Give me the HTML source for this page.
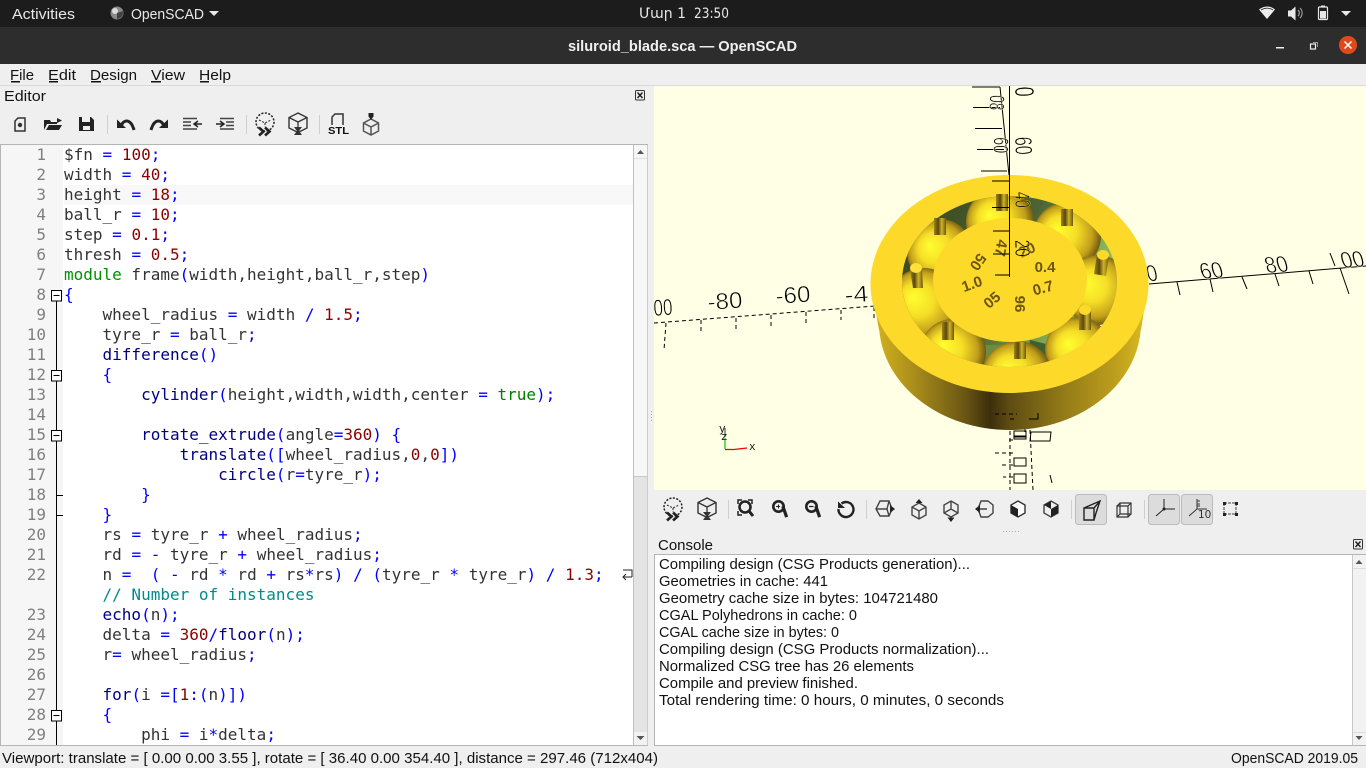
<!DOCTYPE html>
<html><head><meta charset="utf-8"><title>OpenSCAD</title>
<style>
html,body{margin:0;padding:0;width:1366px;height:768px;overflow:hidden;background:#efefef}
svg.m{position:absolute;left:0;top:0}
pre{position:absolute;left:64px;top:145px;margin:0;width:570px;height:600px;overflow:hidden;font:16px/20px "DejaVu Sans Mono","Liberation Mono",monospace;color:#333}
i{font-style:normal}
.n{color:#8b0000}.o{color:#0000ff}.k{color:#009000}.b{color:#000080}.c{color:#008b8b}.t{color:#008000}
#ln{position:absolute;left:0;top:145px;width:46px;text-align:right;font:16px/20px "DejaVu Sans Mono",monospace;color:#808080;white-space:pre;height:600px;overflow:hidden}
text{font-family:"Liberation Sans",sans-serif;font-size:15px;fill:#111}
.ax text{font-size:23px;fill:#000;stroke:#ffffe5;stroke-width:.55}
.eng text{font:bold 15px "Liberation Sans",sans-serif;fill:#6b5510;text-anchor:middle}
</style></head><body>
<svg class="m" width="1366" height="768" viewBox="0 0 1366 768" xmlns="http://www.w3.org/2000/svg">
<defs>
<linearGradient id="side" gradientUnits="userSpaceOnUse" x1="871" y1="0" x2="1148" y2="0">
<stop offset="0" stop-color="#d8b620"/><stop offset=".16" stop-color="#a88c1a"/><stop offset=".34" stop-color="#6a5614"/><stop offset=".43" stop-color="#3c2e0c"/><stop offset=".5" stop-color="#5e4c12"/><stop offset=".7" stop-color="#947c18"/><stop offset=".88" stop-color="#bc9e1c"/><stop offset="1" stop-color="#dcbc22"/></linearGradient>
<radialGradient id="ball" cx=".5" cy=".5" r=".56" fx=".34" fy=".4">
<stop offset="0" stop-color="#ffff30"/><stop offset=".42" stop-color="#f6de26"/><stop offset=".74" stop-color="#c2a01c"/><stop offset=".93" stop-color="#6a5410"/><stop offset="1" stop-color="#403208"/></radialGradient>
<linearGradient id="pin" x1="0" x2="1" y1="0" y2="0"><stop offset="0" stop-color="#a08418"/><stop offset=".35" stop-color="#5a4810"/><stop offset=".65" stop-color="#d0b426"/><stop offset="1" stop-color="#6a5612"/></linearGradient>
<linearGradient id="hole" gradientUnits="userSpaceOnUse" x1="930" y1="200" x2="1110" y2="290"><stop offset="0" stop-color="#3c4a22"/><stop offset=".5" stop-color="#4c6434"/><stop offset="1" stop-color="#9ccc60"/></linearGradient>
<clipPath id="hc"><ellipse cx="1009.5" cy="281.5" rx="107.5" ry="85.5"/></clipPath>
<clipPath id="vp"><rect x="654" y="86" width="712" height="404"/></clipPath>
<g id="prev" fill="none" stroke="#222"><circle cx="0" cy="-2" r="9" stroke-width="1.5" stroke-dasharray="2 1.5"/><path d="M-6-4 0-1 6-4M0-1V3" stroke-width="1" stroke-dasharray="2 1.5"/><path d="M-6 3.500-1.500 7.500-6 11.500M0 3.500 4.500 7.500 0 11.500" stroke-width="2.600"/></g>
<g id="rend" fill="none" stroke="#333"><path d="M0-11 9-6.500V4L0 8.500-9 4V-6.500Z" stroke-width="1.400"/><path d="M-9-6.500 0-2 9-6.500M0-2V3" stroke-width="1.300"/><path d="M-4 3H4L1 7 4 11H-4L-1 7Z" fill="#333" stroke="none"/></g>
<g id="mag"><circle cx="-1.5" cy="-1.5" r="5.2" fill="none" stroke="#222" stroke-width="2.6"/><path d="M2-2 8 8" transform="rotate(12 2 2)" stroke="#222" stroke-width="3.2" fill="none"/></g>
</defs>

<!-- top bar -->
<rect width="1366" height="27" fill="#1c1c1c"/>
<rect y="27" width="1366" height="37" fill="#2d2d2d"/>
<g>
<text x="12" y="19" textLength="63" lengthAdjust="spacingAndGlyphs" style="fill:#e8e8e8">Activities</text>
<circle cx="117" cy="13" r="6.500" fill="#8a8a8a"/><circle cx="115" cy="11" r="3" fill="#dcdcdc"/><path d="M117 19a6.500 6.500 0 0 0 6-8l-6 2z" fill="#444"/>
<text x="131" y="19" textLength="73" lengthAdjust="spacingAndGlyphs" style="fill:#e8e8e8">OpenSCAD</text>
<path d="M209 11h10l-5 5z" fill="#e8e8e8"/>
<text x="639" y="18" textLength="47" lengthAdjust="spacingAndGlyphs" style='fill:#e8e8e8;font-family:"DejaVu Sans",sans-serif;font-size:14px'>Մար 1</text>
<text x="694" y="18" textLength="35" lengthAdjust="spacingAndGlyphs" style='fill:#e8e8e8;font-family:"DejaVu Sans",sans-serif;font-size:14px'>23:50</text>
<path d="M1259 9.500C1264 5.500 1270 5.500 1275 9.500L1267 19Z" fill="#eee"/><path d="M1261 10C1265 7.500 1269 7.500 1273 10" stroke="#1c1c1c" stroke-width=".8" fill="none"/>
<path d="M1288 10.500h3l4.500-4v14l-4.500-4h-3z" fill="#e8e8e8"/><path d="M1298 10a4 4 0 0 1 0 6M1300 8a7 7 0 0 1 0 10" stroke="#999" stroke-width="1.200" fill="none"/>
<rect x="1318.500" y="7" width="9" height="12.500" rx="1" fill="none" stroke="#e8e8e8" stroke-width="1.200"/><rect x="1321" y="5.500" width="4" height="1.500" fill="#e8e8e8"/><rect x="1320" y="11" width="6" height="7.500" fill="#e8e8e8"/>
<path d="M1341 11h10l-5 5z" fill="#e8e8e8"/>
<text x="568" y="51" textLength="229" lengthAdjust="spacingAndGlyphs" style="fill:#f0f0f0;font-weight:bold">siluroid_blade.sca — OpenSCAD</text>
<rect x="1276" y="47" width="8" height="1.500" fill="#f0f0f0"/>
<rect x="1310.500" y="44" width="5" height="5" fill="none" stroke="#f0f0f0" stroke-width="1.200"/><path d="M1313 42.500h4.500v4.500" stroke="#999" fill="none"/>
<circle cx="1348" cy="45" r="9" fill="#e2491a"/><path d="M1344.500 41.500 1351.500 48.500M1351.500 41.500 1344.500 48.500" stroke="#fff" stroke-width="1.500"/>
</g>

<!-- menu -->
<rect y="64" width="1366" height="21" fill="#efefef"/>
<rect y="85" width="1366" height="1" fill="#dadada"/>
<text x="10" y="80" textLength="24" lengthAdjust="spacingAndGlyphs">File</text><rect x="11" y="81" width="9" height="1.500" fill="#111"/>
<text x="48" y="80" textLength="28" lengthAdjust="spacingAndGlyphs">Edit</text><rect x="49" y="81" width="9" height="1.500" fill="#111"/>
<text x="90" y="80" textLength="47" lengthAdjust="spacingAndGlyphs">Design</text><rect x="91" y="81" width="10" height="1.500" fill="#111"/>
<text x="151" y="80" textLength="34" lengthAdjust="spacingAndGlyphs">View</text><rect x="151" y="81" width="10" height="1.500" fill="#111"/>
<text x="199" y="80" textLength="32" lengthAdjust="spacingAndGlyphs">Help</text><rect x="200" y="81" width="9" height="1.500" fill="#111"/>
<text x="4" y="101" textLength="42" lengthAdjust="spacingAndGlyphs">Editor</text>
<g><rect x="635.500" y="90.500" width="9" height="9.500" rx="1" fill="none" stroke="#333"/><path d="M637.500 92.500 642.500 98M642.500 92.500 637.500 98" stroke="#222" stroke-width="1.500"/></g>

<!-- editor toolbar -->
<g fill="none" stroke="#333">
<path d="M18 118h7v13H15v-10z" stroke-width="1.500"/><circle cx="20" cy="125" r="2.200" fill="#333" stroke="none"/>
<path d="M44 120h6l1 2h6v2H47l-3 6zM46 130l3-5h13l-3 5z" fill="#222" stroke="none"/><path d="M57 118l5 2.500-5 2.500z" fill="#222" stroke="none"/>
<path d="M79 117h12l3 3v11H79zM82 117v5h8v-5M82 131v-6h9v6" fill="#222" stroke="none"/><rect x="83" y="126" width="7" height="4" fill="#efefef" stroke="none"/><rect x="83" y="118" width="5" height="3" fill="#efefef" stroke="none"/>
<path d="M121 126C124 118.500 131 119 134 130" stroke="#222" stroke-width="3"/><path d="M117 119.500V128H126Z" fill="#222" stroke="none"/>
<path d="M164 126C161 118.500 154 119 151 130" stroke="#222" stroke-width="3"/><path d="M168 119.500V128H159Z" fill="#222" stroke="none"/>
<path d="M183 118.500h14M183 122h8M183 125.500h8M183 129h14" stroke-width="1.500" stroke="#444"/><path d="M202 124h-7M198 121l-4 3 4 3" stroke="#222" stroke-width="1.500"/>
<path d="M220 118.500h14M226 122h8M226 125.500h8M220 129h14" stroke-width="1.500" stroke="#444"/><path d="M216 124h7M220 121l4 3-4 3" stroke="#222" stroke-width="1.500"/>
</g>
<rect x="107" y="115" width="1" height="19" fill="#cfcfcf"/><rect x="246" y="115" width="1" height="19" fill="#cfcfcf"/><rect x="319" y="115" width="1" height="19" fill="#cfcfcf"/>
<use href="#prev" x="265" y="124"/><use href="#rend" x="298" y="124"/>
<path d="M332 125v-8h0l3-3h8v11" fill="none" stroke="#333" stroke-width="1.500"/>
<text x="328" y="134" textLength="21" lengthAdjust="spacingAndGlyphs" style="font-size:10.500px;font-weight:bold;fill:#111">STL</text>
<g fill="none" stroke="#555" stroke-width="1.500"><path d="M371 119 378.500 123V131L371 135 363.500 131V123ZM363.500 123 371 127 378.500 123M371 127V135"/></g><rect x="368.500" y="113" width="5" height="4" fill="#222"/><path d="M369 117h4l-2 3z" fill="#222"/>

<!-- editor frame -->
<rect x="0" y="144" width="648" height="601" fill="#fff" stroke="none"/>
<rect x="0.500" y="144.500" width="647" height="601" fill="none" stroke="#b5b5b5"/>
<rect x="1" y="145" width="62" height="600" fill="#f6f6f6"/>
<rect x="64" y="185" width="570" height="20" fill="#f8f8f8"/>
<rect x="633.500" y="145" width="14" height="600" fill="#e4e4e4"/>
<rect x="633" y="145" width="1" height="600" fill="#c0c0c0"/>
<rect x="634" y="145" width="13" height="331" fill="#f7f7f7"/>
<rect x="634" y="158" width="13" height="1" fill="#e0e0e0"/><rect x="634" y="476" width="13" height="1" fill="#c8c8c8"/>
<rect x="634" y="732" width="13" height="13" fill="#f2f2f2"/>
<path d="M637 154h7l-3.500-4z" fill="#555"/><path d="M636.500 736h8l-4 4z" fill="#555"/>

<!-- fold margin -->
<path d="M56.500 295V745" stroke="#000"/>
<g fill="#fff" stroke="#000"><rect x="51.500" y="290.500" width="10" height="10.500"/><rect x="51.500" y="370.500" width="10" height="10.500"/><rect x="51.500" y="430.500" width="10" height="10.500"/><rect x="51.500" y="710.500" width="10" height="10.500"/></g>
<path d="M53.500 295.500h6M53.500 375.500h6M53.500 435.500h6M53.500 715.500h6M57 495.500h6M57 515.500h6" stroke="#000"/>
<path d="M632 577h-9M626 574l-3 3 3 3M623 570h9v7" fill="none" stroke="#222"/>

<!-- viewer -->
<rect x="654" y="86" width="712" height="404" fill="#ffffe5"/>
<g clip-path="url(#vp)">
<g fill="none" stroke="#000" stroke-width="1">
<path stroke-dasharray="4 3" d="M654 323 875 306M666 323 664 350M701 320V332M736 318V329M771 315V326M806 312V323M841 310V320M874 307V318"/>
<path stroke-dasharray="4 3" d="M1010 424V490M1030 430 1033 490M1025 415V432M1013 414h-6M1013 440h-7M1013 453h-21M1013 465h-12M1013 477h-10"/>
<path d="M1149 284 1366 266M1177 282 1180 295M1210 279 1213 292M1242 277 1247 289M1275 274 1279 286M1309 271 1313 284M1340 268 1349 294M1330 253 1335 266M1050 475 1052 483"/>
<path d="M1009.500 85V175M971 87M972 87H1000M1000 87 1009 175M973 107.500H1000M975 128.500H1002M977 149.500H1004M981 171H1007"/>
</g>
<!-- axis labels -->
<g class="ax">
<text transform="translate(708,310) rotate(-4)" textLength="35" lengthAdjust="spacingAndGlyphs">-80</text>
<text transform="translate(776,304) rotate(-4)" textLength="35" lengthAdjust="spacingAndGlyphs">-60</text>
<text transform="translate(845,303) rotate(-4)" textLength="24" lengthAdjust="spacingAndGlyphs">-4</text>
<text transform="translate(654,316) rotate(-4)" textLength="19" lengthAdjust="spacingAndGlyphs">00</text>
<text transform="translate(1202,279) rotate(-4) skewX(12)" textLength="23" lengthAdjust="spacingAndGlyphs">60</text>
<text transform="translate(1267,273) rotate(-4) skewX(12)" textLength="23" lengthAdjust="spacingAndGlyphs">80</text>
<text transform="translate(1343,268) rotate(-4) skewX(12)" textLength="23" lengthAdjust="spacingAndGlyphs">00</text>
<text transform="translate(1148,281) skewX(12)" textLength="11" lengthAdjust="spacingAndGlyphs">0</text>
<text transform="translate(990,95) rotate(92)" textLength="15" lengthAdjust="spacingAndGlyphs" style="font-size:21px">08</text>
<text transform="translate(994,137) rotate(92)" textLength="16" lengthAdjust="spacingAndGlyphs" style="font-size:21px">60</text>
<text transform="translate(1015,137) rotate(88)" textLength="18" lengthAdjust="spacingAndGlyphs" style="font-size:24px">60</text>
<text transform="translate(1015,87) rotate(88)" textLength="10" lengthAdjust="spacingAndGlyphs" style="font-size:27px">0</text>
</g>
<!-- wheel -->
<path d="M871 284 879 330 1141 330 1148 284Z" fill="url(#side)"/>
<ellipse cx="1010" cy="323" rx="131" ry="107" fill="url(#side)"/>
<ellipse cx="1009.500" cy="284" rx="139" ry="109" fill="#fdd92a"/>
<ellipse cx="1009.500" cy="281.500" rx="107.500" ry="85.500" fill="url(#hole)"/>
<g clip-path="url(#hc)">
<path d="M920 331 930 340 917 338ZM1097 326 1108 320 1101 333Z" fill="#fff"/>
<path d="M1030 340 1050 345 1045 370H1025Z" fill="#3f5f30"/>
<path d="M970 345 1000 345 1000 370 975 370Z" fill="#6b8c42"/>
<circle cx="1000" cy="222" r="34" fill="url(#ball)"/>
<circle cx="1067" cy="236" r="34" fill="url(#ball)"/>
<circle cx="940" cy="252" r="33" fill="url(#ball)"/>
<circle cx="1097" cy="290" r="35" fill="url(#ball)"/>
<circle cx="1078" cy="350" r="33" fill="url(#ball)"/>
<circle cx="924" cy="304" r="36" fill="url(#ball)"/>
<circle cx="953" cy="352" r="33" fill="url(#ball)"/>
<circle cx="1017" cy="376" r="35" fill="url(#ball)"/>
</g>
<!-- pins -->
<g>
<rect x="996" y="194" width="12" height="17" fill="url(#pin)"/>
<rect x="1061" y="209" width="12" height="17" fill="url(#pin)"/>
<rect x="934" y="218" width="12" height="17" fill="url(#pin)"/>
<path d="M1097 254 1109 256 1106 276 1094 274Z" fill="url(#pin)"/><ellipse cx="1103" cy="255" rx="6" ry="5" fill="#fdd92a"/>
<path d="M910 269 922 268 923 288 913 288Z" fill="url(#pin)"/><ellipse cx="916" cy="268" rx="6" ry="5" fill="#ffdf3a"/>
<rect x="1079" y="310" width="12" height="20" fill="url(#pin)"/><ellipse cx="1085" cy="310" rx="6" ry="5" fill="#fdd92a"/>
<rect x="942" y="322" width="12" height="18" fill="url(#pin)"/>
</g>
<ellipse cx="1010" cy="280" rx="77" ry="62" fill="#fdd92a"/>
<rect x="1014" y="342" width="12" height="17" fill="url(#pin)"/>
<!-- engraved digits -->
<g class="eng">
<text transform="translate(1001,248) rotate(100)" y="5">47</text>
<text transform="translate(978,262) rotate(125)" y="5">50</text>
<text transform="translate(972,284) rotate(-20)" y="5">1.0</text>
<text transform="translate(992,300) rotate(-40)" y="5">05</text>
<text transform="translate(1020,304) rotate(90)" y="5">96</text>
<text transform="translate(1043,288) rotate(-15)" y="5">0.7</text>
<text transform="translate(1045,267)" y="5">0.4</text>
<text transform="translate(1027,250) rotate(-25)" y="5">20</text>
</g>
<!-- front axes -->
<g fill="none" stroke="#000">
<path d="M1009.500 175V277M992 181H1009M992 207.500H1009M993 231H1009M993 254H1009M995 275H1009"/>
<path d="M1029 419h9v-6M1031 432h20l-1 9h-20z M1014 431h12v5h-12z"/>
<path d="M995 414h22M1010 419h7" stroke-dasharray="4 3"/>
<path d="M1014 437h12v2h-12zM1014 458h12v8h-12zM1014 474h12v9h-12z"/>
</g>
<g class="ax">
<text transform="translate(1015,192) rotate(88)" textLength="16" lengthAdjust="spacingAndGlyphs" style="font-size:21px;stroke:#fdd92a">40</text>
<text transform="translate(1015,240) rotate(88)" textLength="17" lengthAdjust="spacingAndGlyphs" style="font-size:21px;stroke:#fdd92a">20</text>
</g>
<!-- axes gizmo -->
<path d="M725 449V438" stroke="#0c0" stroke-width="1.200"/><path d="M725 437V428" stroke="#333"/>
<path d="M725 449.500H734L747 448" stroke="#e00" stroke-width="1.200" fill="none"/>
<text x="749" y="450" style="font:11px 'Liberation Mono',monospace;fill:#111">x</text>
<text x="719" y="432" style="font:11px 'Liberation Mono',monospace;fill:#111">y</text>
<text x="721" y="440" style="font:11px 'Liberation Mono',monospace;fill:#111">z</text>
</g>

<!-- viewer toolbar -->
<rect x="654" y="490" width="712" height="64" fill="#efefef"/>
<use href="#prev" x="673" y="509"/><use href="#rend" x="707" y="509"/>
<rect x="728" y="500" width="1" height="19" fill="#cfcfcf"/><rect x="866" y="500" width="1" height="19" fill="#cfcfcf"/><rect x="1071" y="500" width="1" height="19" fill="#cfcfcf"/><rect x="1144" y="500" width="1" height="19" fill="#cfcfcf"/>
<circle cx="745" cy="507" r="5.500" fill="none" stroke="#222" stroke-width="2.600"/><path d="M749 511 753 516" stroke="#222" stroke-width="3"/><path d="M738 504v-4h4M748 500h4v4M738 511v4h4" fill="none" stroke="#222" stroke-width="1.500"/>
<use href="#mag" x="780" y="508"/><path d="M776 506.500h4M778.500 504.500v4" stroke="#222"/>
<use href="#mag" x="813" y="508"/><path d="M809 506.500h4.500" stroke="#222" stroke-width="1.200"/>
<path d="M841.500 503.500A7.500 7.500 0 1 1 838.500 509" fill="none" stroke="#222" stroke-width="2.400"/><path d="M838 501.500V508H845Z" fill="#222"/>
<g fill="none" stroke="#444" stroke-width="1.400">
<path d="M880 501 889 501 892 509 889 516 880 516 876 509Z M876 509H887L889 501M887 509 889 516"/>
<path d="M919 503 926 507V515L919 519 912 515V507ZM912 507 919 511 926 507M919 511V519"/>
<path d="M951 501 958 505V513L951 517 944 513V505ZM944 513 951 509 958 513M951 509V502"/>
<path d="M988 501 993 505V513L988 517 981 517 978 509 981 501ZM978 509H987"/>
<path d="M1051 501 1058 505V513L1051 517 1044 513V505Z"/>
</g>
<path d="M890 505l5 4-5 4zM919 499l3.500 4h-7zM951 522l-3.500-4.500h7zM980 505l-5 4 5 4z" fill="#222"/>
<path d="M1018 501 1025 505V513L1018 517 1011 513V505Z" fill="#fff" stroke="#333" stroke-width="1.400"/><path d="M1011 505 1018 509V517L1011 513Z" fill="#222"/>
<path d="M1051 509 1058 505V513L1051 517Z" fill="#222"/><path d="M1044 505 1051 509V501Z" fill="#222"/>
<rect x="1075.500" y="494.500" width="31" height="30" rx="3" fill="#dcdcdc" stroke="#bbb"/>
<path d="M1084 508h10v12h-10zM1084 508 1100 501 1096 513 1094 520M1094 508 1100 501" fill="none" stroke="#222" stroke-width="1.400"/>
<path d="M1117 506h11v11h-11zM1120 503h11v11h-11zM1117 506l3-3M1128 506l3-3M1117 517l3-3M1128 517l3-3" fill="none" stroke="#333" stroke-width="1.200"/>
<rect x="1148.500" y="494.500" width="31" height="30" rx="3" fill="#dcdcdc" stroke="#bbb"/>
<rect x="1181.500" y="494.500" width="31" height="30" rx="3" fill="#dcdcdc" stroke="#bbb"/>
<path d="M1164 499V509M1164 509H1175M1164 509 1156 516" stroke="#222" fill="none"/><circle cx="1164" cy="509" r="1.500" fill="#222"/>
<path d="M1197 499V509M1197 509H1207M1197 509 1189 516M1197 501h3M1197 504h3M1197 506h3" stroke="#333" fill="none"/>
<text x="1198" y="518" style="font:10.500px 'DejaVu Sans',sans-serif;fill:#333">10</text>
<path d="M1224 503h12M1224 514h12M1224 503v11M1236 503v11" stroke="#444" stroke-dasharray="3 1" fill="none"/><g fill="#222"><rect x="1223" y="502" width="3" height="3"/><rect x="1235" y="502" width="3" height="3"/><rect x="1223" y="513" width="3" height="3"/><rect x="1235" y="513" width="3" height="3"/></g>
<g fill="#aaa"><rect x="1003" y="531" width="1" height="1"/><rect x="1006" y="531" width="1" height="1"/><rect x="1009" y="531" width="1" height="1"/><rect x="1012" y="531" width="1" height="1"/><rect x="1015" y="531" width="1" height="1"/><rect x="1018" y="531" width="1" height="1"/><rect x="651" y="411" width="1" height="1"/><rect x="651" y="414" width="1" height="1"/><rect x="651" y="417" width="1" height="1"/><rect x="651" y="420" width="1" height="1"/></g>

<text x="658" y="550" textLength="55" lengthAdjust="spacingAndGlyphs">Console</text>
<g transform="translate(718,449)"><rect x="635.500" y="90.500" width="9" height="9.500" rx="1" fill="none" stroke="#333"/><path d="M637.500 92.500 642.500 98M642.500 92.500 637.500 98" stroke="#222" stroke-width="1.500"/></g>

<!-- console -->
<rect x="654.500" y="554.500" width="711" height="191" fill="#fff" stroke="#b5b5b5"/>
<rect x="1352" y="555" width="14" height="190" fill="#f2f2f2"/><rect x="1352" y="555" width="1" height="190" fill="#c8c8c8"/>
<rect x="1353" y="568" width="13" height="1" fill="#ddd"/><rect x="1353" y="732" width="13" height="1" fill="#ddd"/>
<path d="M1355.500 564h7l-3.500-4z" fill="#555"/><path d="M1355.500 736h7l-3.500 4z" fill="#555"/>
<text x="659" y="569" textLength="311" lengthAdjust="spacingAndGlyphs">Compiling design (CSG Products generation)...</text>
<text x="659" y="586" textLength="169" lengthAdjust="spacingAndGlyphs">Geometries in cache: 441</text>
<text x="659" y="603" textLength="279" lengthAdjust="spacingAndGlyphs">Geometry cache size in bytes: 104721480</text>
<text x="659" y="620" textLength="198" lengthAdjust="spacingAndGlyphs">CGAL Polyhedrons in cache: 0</text>
<text x="659" y="637" textLength="180" lengthAdjust="spacingAndGlyphs">CGAL cache size in bytes: 0</text>
<text x="659" y="654" textLength="330" lengthAdjust="spacingAndGlyphs">Compiling design (CSG Products normalization)...</text>
<text x="659" y="671" textLength="255" lengthAdjust="spacingAndGlyphs">Normalized CSG tree has 26 elements</text>
<text x="659" y="688" textLength="199" lengthAdjust="spacingAndGlyphs">Compile and preview finished.</text>
<text x="659" y="705" textLength="345" lengthAdjust="spacingAndGlyphs">Total rendering time: 0 hours, 0 minutes, 0 seconds</text>

<!-- status -->
<text x="2" y="763" textLength="656" lengthAdjust="spacingAndGlyphs">Viewport: translate = [ 0.00 0.00 3.55 ], rotate = [ 36.40 0.00 354.40 ], distance = 297.46 (712x404)</text>
<text x="1231" y="763" textLength="127" lengthAdjust="spacingAndGlyphs">OpenSCAD 2019.05</text>
</svg>
<div id="ln">1
2
3
4
5
6
7
8
9
10
11
12
13
14
15
16
17
18
19
20
21
22

23
24
25
26
27
28
29</div>
<pre>$fn <i class="o">=</i> <i class="n">100</i><i class="o">;</i>
width <i class="o">=</i> <i class="n">40</i><i class="o">;</i>
height <i class="o">=</i> <i class="n">18</i><i class="o">;</i>
ball_r <i class="o">=</i> <i class="n">10</i><i class="o">;</i>
step <i class="o">=</i> <i class="n">0.1</i><i class="o">;</i>
thresh <i class="o">=</i> <i class="n">0.5</i><i class="o">;</i>
<i class="k">module</i> frame<i class="o">(</i>width,height,ball_r,step<i class="o">)</i>
<i class="o">{</i>
    wheel_radius <i class="o">=</i> width <i class="o">/</i> <i class="n">1.5</i><i class="o">;</i>
    tyre_r <i class="o">=</i> ball_r<i class="o">;</i>
    <i class="b">difference</i><i class="o">()</i>
    <i class="o">{</i>
        <i class="b">cylinder</i><i class="o">(</i>height,width,width,center <i class="o">=</i> <i class="t">true</i><i class="o">);</i>

        <i class="b">rotate_extrude</i><i class="o">(</i>angle<i class="o">=</i><i class="n">360</i><i class="o">) {</i>
            <i class="b">translate</i><i class="o">([</i>wheel_radius,<i class="n">0</i>,<i class="n">0</i><i class="o">])</i>
                <i class="b">circle</i><i class="o">(</i>r<i class="o">=</i>tyre_r<i class="o">);</i>
        <i class="o">}</i>
    <i class="o">}</i>
    rs <i class="o">=</i> tyre_r <i class="o">+</i> wheel_radius<i class="o">;</i>
    rd <i class="o">=</i> <i class="o">-</i> tyre_r <i class="o">+</i> wheel_radius<i class="o">;</i>
    n <i class="o">=</i>  <i class="o">(</i> <i class="o">-</i> rd <i class="o">*</i> rd <i class="o">+</i> rs<i class="o">*</i>rs<i class="o">)</i> <i class="o">/</i> <i class="o">(</i>tyre_r <i class="o">*</i> tyre_r<i class="o">)</i> <i class="o">/</i> <i class="n">1.3</i><i class="o">;</i>
    <i class="c">// Number of instances</i>
    <i class="b">echo</i><i class="o">(</i>n<i class="o">);</i>
    delta <i class="o">=</i> <i class="n">360</i><i class="o">/</i><i class="b">floor</i><i class="o">(</i>n<i class="o">);</i>
    r<i class="o">=</i> wheel_radius<i class="o">;</i>

    <i class="b">for</i><i class="o">(</i>i <i class="o">=[</i><i class="n">1</i><i class="o">:(</i>n<i class="o">)])</i>
    <i class="o">{</i>
        phi <i class="o">=</i> i<i class="o">*</i>delta<i class="o">;</i></pre>
</body></html>
